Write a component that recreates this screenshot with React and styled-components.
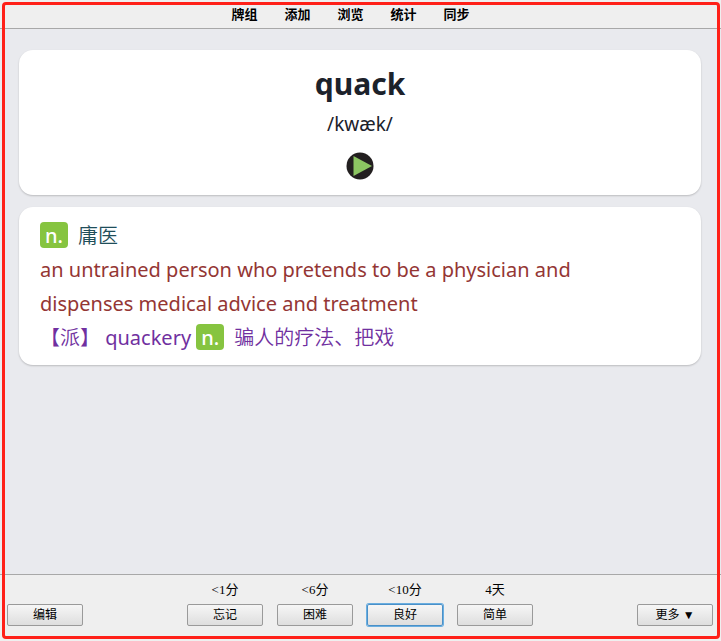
import styled, { createGlobalStyle } from "styled-components";

const GlobalStyle = createGlobalStyle`
  * {
    box-sizing: border-box;
  }
  body {
    margin: 0;
    background-color: #efefef;
    font-family: "Liberation Serif", "Noto Sans CJK SC", serif;
  }
`;

const Container = styled.div`
  display: flex;
  flex-direction: column;
  min-height: 100vh;
`;

const Frame = styled.div`
  position: fixed;
  inset: 2px 1px 2px 2px;
  border: 3px solid #ff2018;
  border-radius: 4px;
  pointer-events: none;
`;

const Toolbar = styled.nav`
  display: flex;
  justify-content: center;
  gap: 27px;
  height: 29px;
  padding-right: 20px;
  border-bottom: 1px solid #a8a8a8;
`;

const ToolbarLink = styled.a`
  font-family: "Noto Sans CJK SC", sans-serif;
  font-size: 13px;
  font-weight: 700;
  line-height: 28px;
  color: black;
  text-decoration: none;
`;

const Review = styled.main`
  flex: 1;
  display: flex;
  flex-direction: column;
  gap: 12px;
  padding: 21px 20px 20px 19px;
  background-color: #e9eaee;
  font-family: "Noto Sans", "Noto Sans CJK SC", sans-serif;
`;

const Card = styled.section`
  border-radius: 14px;
  background-color: white;
  box-shadow: 0 1px 2px rgba(0, 0, 0, 0.2);
`;

const WordCard = styled(Card)`
  display: flex;
  flex-direction: column;
  align-items: center;
  padding: 12px 20px 15px;
  color: #1c222b;
`;

const Word = styled.h1`
  margin: 0;
  font-size: 30px;
  font-weight: 700;
  line-height: 44px;
`;

const Phonetic = styled.div`
  font-size: 19px;
  line-height: 36px;
`;

const PlayButton = styled.button`
  display: flex;
  margin-top: 10px;
  padding: 0;
  border: none;
  background: none;
  cursor: pointer;
`;

const MeaningCard = styled(Card)`
  padding: 12px 40px 10px 21px;
  font-size: 20px;
`;

const Line = styled.p`
  margin: 0;
  line-height: 34px;
  color: ${(props) => props.$color};
`;

const Chinese = styled.span`
  font-family: "Noto Sans CJK SC", sans-serif;
  font-weight: 350;
  line-height: 1;
`;

const PartOfSpeech = styled.span`
  display: inline-block;
  margin-right: 10px;
  padding: 2px 5px 0;
  border-radius: 4px;
  background-color: #86c440;
  color: white;
  font-weight: 500;
  line-height: 24px;
`;

const BottomBar = styled.footer`
  display: grid;
  grid-template-columns: 1fr auto 1fr;
  align-items: end;
  height: 67px;
  padding: 0 8px 15px 7px;
  border-top: 1px solid #a8a8a8;
`;

const Answers = styled.div`
  display: flex;
  gap: 14px;
`;

const Answer = styled.div`
  display: flex;
  flex-direction: column;
  align-items: center;
`;

const Interval = styled.label`
  font-size: 13px;
  line-height: 16px;
  margin-bottom: 6px;
`;

const Button = styled.button`
  width: 76px;
  height: 22px;
  padding: 0;
  border: 1px solid ${(props) => (props.$active ? "#4a90c8" : "#9a9a9a")};
  border-radius: 2px;
  background: linear-gradient(#f6f6f6, #dedede);
  box-shadow: ${(props) => (props.$active ? "0 0 0 1px #6aaee0" : "none")};
  color: black;
  font-family: "Liberation Sans", "Noto Sans CJK SC", sans-serif;
  font-size: 12px;
  line-height: 18px;
  cursor: pointer;
`;

const MoreButton = styled(Button)`
  justify-self: end;
`;

const links = ["牌组", "添加", "浏览", "统计", "同步"];

const answers = [
  { id: "again", interval: "<1分", title: "忘记" },
  { id: "hard", interval: "<6分", title: "困难" },
  { id: "good", interval: "<10分", title: "良好", active: true },
  { id: "easy", interval: "4天", title: "简单" },
];

const App = () => {
  return (
    <Container>
      <GlobalStyle />
      <Toolbar>
        {links.map((link) => (
          <ToolbarLink href="#" key={link}>
            {link}
          </ToolbarLink>
        ))}
      </Toolbar>
      <Review>
        <WordCard>
          <Word>quack</Word>
          <Phonetic>/kwæk/</Phonetic>
          <PlayButton aria-label="play">
            <svg width="28" height="28" viewBox="0 0 28 28">
              <circle cx="14" cy="14" r="13.5" fill="#231f20" />
              <path d="M7.5 4 L26 14 L7.5 24 Z" fill="#8cc562" />
            </svg>
          </PlayButton>
        </WordCard>
        <MeaningCard>
          <Line $color="#1f4e5a">
            <PartOfSpeech>n.</PartOfSpeech>
            <Chinese>庸医</Chinese>
          </Line>
          <Line $color="#943634">
            an untrained person who pretends to be a physician and dispenses
            medical advice and treatment
          </Line>
          <Line $color="#7030a0">
            <Chinese>【派】</Chinese> quackery <PartOfSpeech>n.</PartOfSpeech>
            <Chinese>骗人的疗法、把戏</Chinese>
          </Line>
        </MeaningCard>
      </Review>
      <BottomBar>
        <Button>编辑</Button>
        <Answers>
          {answers.map((answer) => (
            <Answer key={answer.id}>
              <Interval htmlFor={answer.id}>{answer.interval}</Interval>
              <Button id={answer.id} $active={answer.active}>
                {answer.title}
              </Button>
            </Answer>
          ))}
        </Answers>
        <MoreButton>更多 ▼</MoreButton>
      </BottomBar>
      <Frame />
    </Container>
  );
};

export default App;
